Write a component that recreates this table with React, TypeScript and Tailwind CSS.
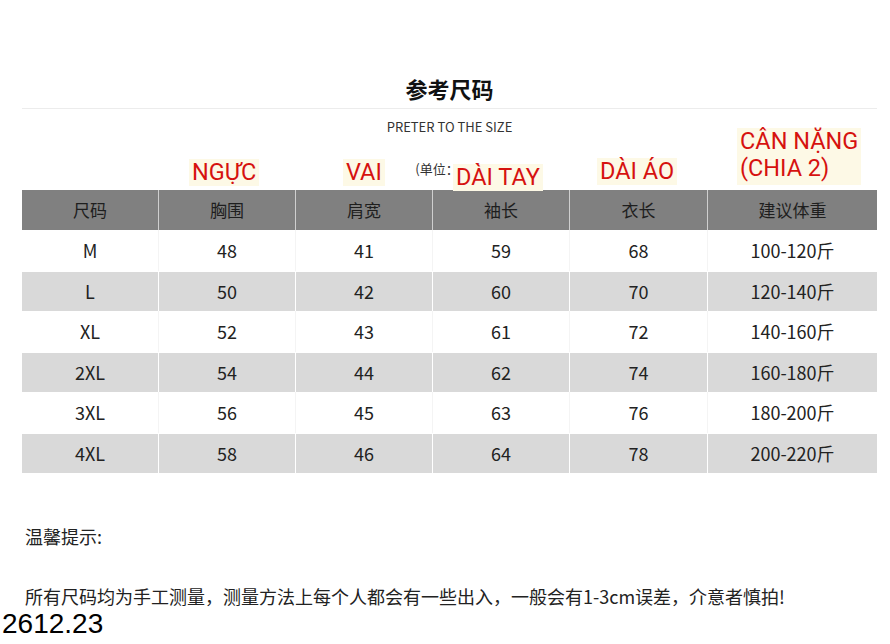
import React from "react";

const cjk = '"Noto Sans CJK SC", "Noto Sans", sans-serif';

const headers = ["尺码", "胸围", "肩宽", "袖长", "衣长", "建议体重"];
const rows = [
  ["M", "48", "41", "59", "68", "100-120斤"],
  ["L", "50", "42", "60", "70", "120-140斤"],
  ["XL", "52", "43", "61", "72", "140-160斤"],
  ["2XL", "54", "44", "62", "74", "160-180斤"],
  ["3XL", "56", "45", "63", "76", "180-200斤"],
  ["4XL", "58", "46", "64", "78", "200-220斤"],
];

const cols = "grid grid-cols-[136px_137px_137px_137px_138px_170px]";

function Label({ children, className }: { children: React.ReactNode; className: string }) {
  return (
    <div
      className={`absolute bg-[#fdf9e6] px-[3px] text-[#d6120f] text-[23.5px] leading-[1.15] ${className}`}
      style={{ fontFamily: "Roboto, sans-serif" }}
    >
      {children}
    </div>
  );
}

export default function App() {
  return (
    <div className="relative w-[890px] h-[644px] bg-white overflow-hidden" style={{ fontFamily: cjk }}>
      <div className="pl-[22px] pr-[13px] pt-[69px]">
        <div className="h-[40px] flex items-center justify-center text-[22px] font-bold text-[#111] border-b border-[#ececec]">
          参考尺码
        </div>
        <div className="h-[36px] flex items-center justify-center text-[13px] text-[#333]">
          PRETER TO THE SIZE
        </div>
        <div className="h-[24px] mt-[12px] mb-[9px] flex items-center justify-center text-[13px] text-[#333]">
          <span className="ml-[-2px]">(单位：cm)</span>
        </div>
        <div className={`${cols} h-[40px] bg-[#808080] text-[17px] text-[#1e1e1e]`}>
          {headers.map((h, i) => (
            <div key={i} className={`flex items-center justify-center ${i > 0 ? "border-l border-[#cfcfcf]" : ""}`}>
              {h}
            </div>
          ))}
        </div>
        {rows.map((r, ri) => (
          <div
            key={ri}
            className={`${cols} h-[40.5px] text-[18px] text-[#222] ${ri % 2 === 1 ? "bg-[#d9d9d9] border-t border-white" : "bg-white"}`}
          >
            {r.map((c, ci) => (
              <div
                key={ci}
                className={`flex items-center justify-center ${ci > 0 ? (ri % 2 === 1 ? "border-l border-white" : "border-l border-[#f4f4f4]") : ""}`}
              >
                {c}
              </div>
            ))}
          </div>
        ))}
      </div>
      <div className="px-[25px] mt-[51px] h-[24px] flex items-center text-[18px] text-[#222]">温馨提示:</div>
      <div className="px-[25px] mt-[36px] h-[24px] flex items-center text-[18px] text-[#222] whitespace-nowrap">
        所有尺码均为手工测量，测量方法上每个人都会有一些出入，一般会有1-3cm误差，介意者慎拍!
      </div>
      <div
        className="pl-[2px] mt-[2px] h-[28px] flex items-center text-[28px] text-black"
        style={{ fontFamily: '"Liberation Sans", Arial, sans-serif' }}
      >
        2612.23
      </div>

      <Label className="left-[189px] top-[159px]">NGỰC</Label>
      <Label className="left-[343px] top-[159px]">VAI</Label>
      <Label className="left-[453px] top-[164px]">DÀI TAY</Label>
      <Label className="left-[597px] top-[158px]">DÀI ÁO</Label>
      <Label className="left-[737px] top-[128px] pb-[3px]">
        CÂN NẶNG
        <br />
        (CHIA 2)
      </Label>
    </div>
  );
}
